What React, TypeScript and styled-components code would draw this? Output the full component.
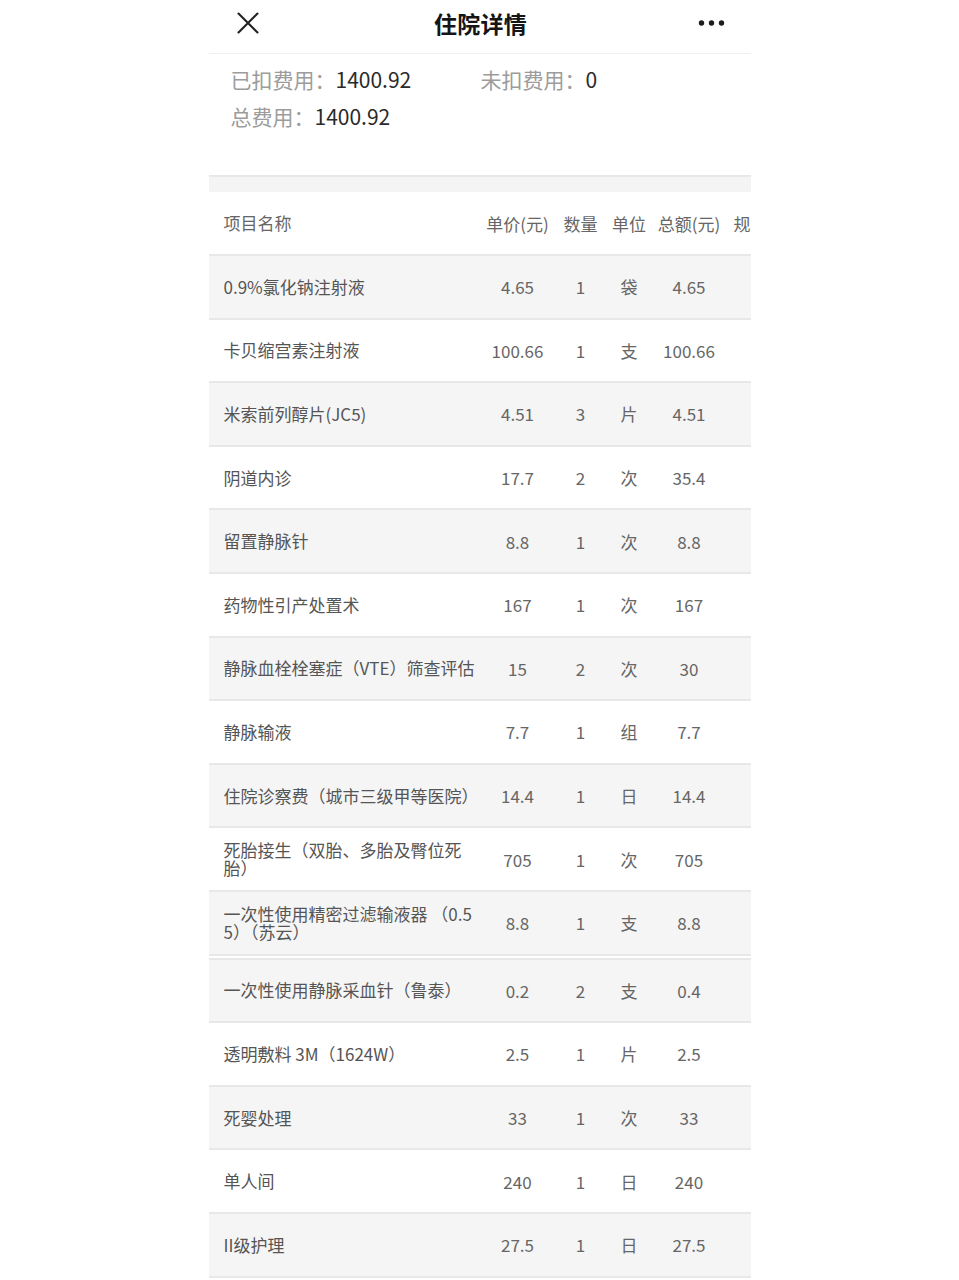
import React from "react";
import styled, { createGlobalStyle } from "styled-components";

const GlobalStyle = createGlobalStyle`
  html, body {
    margin: 0;
    padding: 0;
    background: #ffffff;
  }
  body {
    font-family: "Noto Sans CJK SC", "Liberation Sans", sans-serif;
  }
`;

const Page = styled.div`
  width: 542px;
  margin: 0 auto;
  background: #fff;
`;

const NavBar = styled.header`
  height: 54px;
  box-sizing: border-box;
  display: grid;
  grid-template-columns: 1fr auto 1fr;
  align-items: center;
  padding: 0 26px 7px 28px;
  border-bottom: 1px solid #f0f0f0;
`;

const NavTitle = styled.h1`
  margin: 0;
  font-size: 23px;
  font-weight: 700;
  color: #151515;
  letter-spacing: 0.3px;
`;

const NavLeft = styled.div`
  display: flex;
  justify-content: flex-start;
`;

const NavRight = styled.div`
  display: flex;
  justify-content: flex-end;
`;

const Summary = styled.section`
  display: grid;
  grid-template-columns: 250px auto;
  padding: 7px 0 40px 22px;
  font-size: 21px;
  line-height: 37px;
`;

const SummaryItem = styled.div`
  white-space: nowrap;
`;

const Label = styled.span`
  color: #9c9c9c;
`;

const Value = styled.span`
  color: #2a2a2a;
`;

const Band = styled.div`
  height: 15px;
  background: #f4f4f4;
  border-top: 2px solid #e8e8e8;
`;

const Table = styled.div`
  width: 542px;
  overflow: hidden;
`;

const Section = styled.div<{ $split?: boolean }>`
  ${(p) => (p.$split ? "margin-top: 2px; border-top: 2px solid #e8e8e8;" : "")}
`;

const Row = styled.div<{ $striped?: boolean; $head?: boolean }>`
  display: grid;
  grid-template-columns: 274px 70px 56px 41px 79px 22px;
  width: 542px;
  align-items: center;
  min-height: ${(p) => (p.$head ? "62px" : "61.6px")};
  background: ${(p) => (p.$striped ? "#f5f5f5" : "#ffffff")};
  border-bottom: 2px solid #e8e8e8;
  font-size: 17px;
  color: ${(p) => (p.$head ? "#666" : "#555")};
`;

const NameCell = styled.div`
  padding-left: 15px;
  line-height: 18px;
  display: flex;
  flex-direction: column;
`;

const NameLine = styled.span`
  white-space: nowrap;
`;

const NumCell = styled.div`
  text-align: center;
  white-space: nowrap;
  color: #666;
`;

const SpecCell = styled.div`
  padding-left: 5px;
  white-space: nowrap;
  overflow: hidden;
`;

const CloseIcon = () => (
  <svg width="22" height="22" viewBox="0 0 22 22">
    <path d="M1.5 1.5 L20.5 20.5 M20.5 1.5 L1.5 20.5" stroke="#222" strokeWidth="2.1" strokeLinecap="round" />
  </svg>
);

const MoreIcon = () => (
  <svg width="27" height="8" viewBox="0 0 27 8">
    <circle cx="3.5" cy="4" r="2.7" fill="#1c1c1c" />
    <circle cx="13.5" cy="4" r="2.7" fill="#1c1c1c" />
    <circle cx="23.5" cy="4" r="2.7" fill="#1c1c1c" />
  </svg>
);

type Item = [string[], string, string, string, string];

const part1: Item[] = [
  [["0.9%氯化钠注射液"], "4.65", "1", "袋", "4.65"],
  [["卡贝缩宫素注射液"], "100.66", "1", "支", "100.66"],
  [["米索前列醇片(JC5)"], "4.51", "3", "片", "4.51"],
  [["阴道内诊"], "17.7", "2", "次", "35.4"],
  [["留置静脉针"], "8.8", "1", "次", "8.8"],
  [["药物性引产处置术"], "167", "1", "次", "167"],
  [["静脉血栓栓塞症（VTE）筛查评估"], "15", "2", "次", "30"],
  [["静脉输液"], "7.7", "1", "组", "7.7"],
  [["住院诊察费（城市三级甲等医院）"], "14.4", "1", "日", "14.4"],
  [["死胎接生（双胎、多胎及臀位死", "胎）"], "705", "1", "次", "705"],
  [["一次性使用精密过滤输液器 （0.5", "5）（苏云）"], "8.8", "1", "支", "8.8"],
];

const part2: Item[] = [
  [["一次性使用静脉采血针（鲁泰）"], "0.2", "2", "支", "0.4"],
  [["透明敷料 3M（1624W）"], "2.5", "1", "片", "2.5"],
  [["死婴处理"], "33", "1", "次", "33"],
  [["单人间"], "240", "1", "日", "240"],
  [["II级护理"], "27.5", "1", "日", "27.5"],
];

const DataRow = ({ item, striped }: { item: Item; striped: boolean }) => (
  <Row $striped={striped}>
    <NameCell>
      {item[0].map((line, i) => (
        <NameLine key={i}>{line}</NameLine>
      ))}
    </NameCell>
    <NumCell>{item[1]}</NumCell>
    <NumCell>{item[2]}</NumCell>
    <NumCell>{item[3]}</NumCell>
    <NumCell>{item[4]}</NumCell>
    <SpecCell />
  </Row>
);

export default function App() {
  return (
    <>
      <GlobalStyle />
      <Page>
        <NavBar>
          <NavLeft>
            <CloseIcon />
          </NavLeft>
          <NavTitle>住院详情</NavTitle>
          <NavRight>
            <MoreIcon />
          </NavRight>
        </NavBar>
        <Summary>
          <SummaryItem>
            <Label>已扣费用：</Label>
            <Value>1400.92</Value>
          </SummaryItem>
          <SummaryItem>
            <Label>未扣费用：</Label>
            <Value>0</Value>
          </SummaryItem>
          <SummaryItem>
            <Label>总费用：</Label>
            <Value>1400.92</Value>
          </SummaryItem>
        </Summary>
        <Band />
        <Table>
          <Row $head>
            <NameCell>
              <NameLine>项目名称</NameLine>
            </NameCell>
            <NumCell>单价(元)</NumCell>
            <NumCell>数量</NumCell>
            <NumCell>单位</NumCell>
            <NumCell>总额(元)</NumCell>
            <SpecCell>规</SpecCell>
          </Row>
          <Section>
            {part1.map((it, i) => (
              <DataRow key={i} item={it} striped={i % 2 === 0} />
            ))}
          </Section>
          <Section $split>
            {part2.map((it, i) => (
              <DataRow key={i} item={it} striped={i % 2 === 0} />
            ))}
          </Section>
        </Table>
      </Page>
    </>
  );
}
